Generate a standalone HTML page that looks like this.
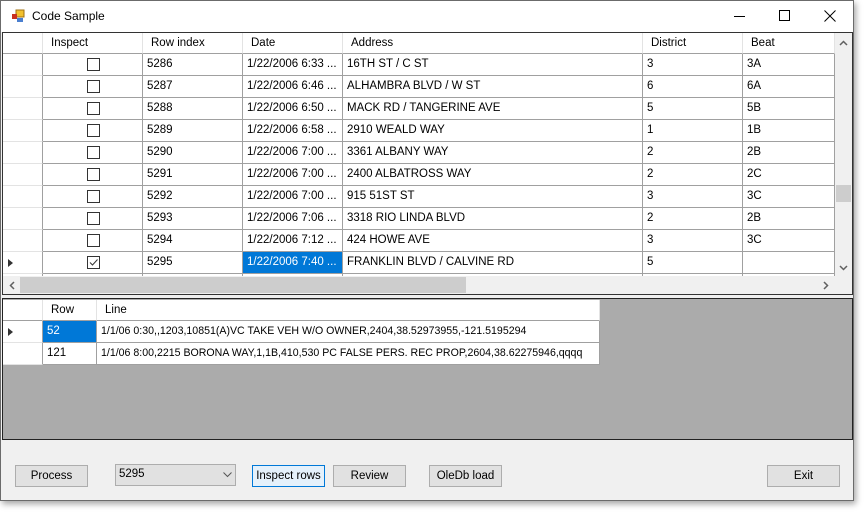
<!DOCTYPE html>
<html><head><style>
*{margin:0;padding:0;box-sizing:border-box}
body{width:866px;height:512px;background:#fff;font-family:"Liberation Sans",sans-serif;font-size:11.5px;color:#000;position:relative;overflow:hidden}
.a{position:absolute}
.win{left:0;top:0;width:854px;height:501px;background:#f0f0f0;border:1px solid #6b6b6b;box-shadow:2px 3px 6px rgba(0,0,0,.35)}
.title{left:1px;top:1px;width:852px;height:31px;background:#fff}
.c{position:absolute;border-right:1px solid #a0a0a0;border-bottom:1px solid #a0a0a0;background:#fff;padding-left:4px;line-height:21px;white-space:nowrap;overflow:hidden}
.h{border-right:1px solid #e3e3e3;padding-left:8px}
.cb{position:absolute;width:13px;height:13px;border:1px solid #333;background:#fff;left:44px;top:4px}
.btn{position:absolute;height:22px;background:#e1e1e1;border:1px solid #adadad;text-align:center;line-height:20px}
</style></head><body>
<div class="a win"></div>
<div class="a title"></div>
<svg class="a" style="left:11px;top:9px" width="14" height="14"><rect x="5" y="1" width="8" height="7" fill="#f2c12e" stroke="#a07010" stroke-width="1"/><rect x="1" y="5" width="5" height="5" fill="#c83020"/><rect x="6" y="9" width="6" height="4" fill="#4a7fd0"/></svg>
<div class="a" style="left:32px;top:9px;font-size:12px">Code Sample</div>
<div class="a" style="left:734px;top:16px;width:11px;height:1px;background:#000"></div>
<div class="a" style="left:779px;top:10px;width:11px;height:11px;border:1px solid #000"></div>
<svg class="a" style="left:824px;top:10px" width="12" height="12"><path d="M0.5 0.5L11.5 11.5M11.5 0.5L0.5 11.5" stroke="#000"/></svg>

<div class="a" style="left:2px;top:32px;width:851px;height:263px;border:1px solid #333;background:#fff;overflow:hidden"></div>
<div class="a" style="left:2px;top:298px;width:851px;height:142px;border:1px solid #222;background:#ababab"></div>
<div id="top"></div>

<div class="btn" style="left:15px;top:465px;width:73px">Process</div>
<div class="a" style="left:115px;top:464px;width:121px;height:22px;background:#e1e1e1;border:1px solid #adadad;padding-left:3px;line-height:18px">5295<svg class="a" style="left:107px;top:7px" width="9" height="6"><path d="M0.5 0.5L4.5 4.5L8.5 0.5" stroke="#555" fill="none"/></svg></div>
<div class="btn" style="left:252px;top:465px;width:73px;background:#e5f1fb;border-color:#0078d7">Inspect rows</div>
<div class="btn" style="left:333px;top:465px;width:73px">Review</div>
<div class="btn" style="left:429px;top:465px;width:73px">OleDb load</div>
<div class="btn" style="left:767px;top:465px;width:73px">Exit</div>

<script>
var o='';
var cols=[[3,40],[43,100],[143,100],[243,100],[343,300],[643,100],[743,92]];
var hd=['','Inspect','Row index','Date','Address','District','Beat'];
for(var i=0;i<7;i++)o+='<div class="c h" style="left:'+cols[i][0]+'px;top:33px;width:'+cols[i][1]+'px;height:21px;border-bottom-color:#a0a0a0">'+hd[i]+'</div>';
var rows=[['5286','1/22/2006 6:33 ...','16TH ST / C ST','3','3A'],['5287','1/22/2006 6:46 ...','ALHAMBRA BLVD / W ST','6','6A'],['5288','1/22/2006 6:50 ...','MACK RD / TANGERINE AVE','5','5B'],['5289','1/22/2006 6:58 ...','2910 WEALD WAY','1','1B'],['5290','1/22/2006 7:00 ...','3361 ALBANY WAY','2','2B'],['5291','1/22/2006 7:00 ...','2400 ALBATROSS WAY','2','2C'],['5292','1/22/2006 7:00 ...','915 51ST ST','3','3C'],['5293','1/22/2006 7:06 ...','3318 RIO LINDA BLVD','2','2B'],['5294','1/22/2006 7:12 ...','424 HOWE AVE','3','3C'],['5295','1/22/2006 7:40 ...','FRANKLIN BLVD / CALVINE RD','5',''],['','','','','']];
for(var r=0;r<rows.length;r++){var y=54+r*22;var h=r==10?3:22;
 for(var i=0;i<7;i++){var st='left:'+cols[i][0]+'px;top:'+y+'px;width:'+cols[i][1]+'px;height:'+h+'px;';var t='';
  if(i==0){t=r==9?'<svg style="position:absolute;left:5px;top:7px" width="5" height="8"><path d="M0 0L5 4L0 8Z" fill="#333"/></svg>':'';st+='border-right-color:#a0a0a0;border-bottom-color:#e3e3e3;'}
  else if(i==1){t=r<10?'<div class="cb">'+(r==9?'<svg width="11" height="11" style="position:absolute;left:0;top:0"><path d="M2 5.5L4.5 8L9.5 2.5" stroke="#333" fill="none"/></svg>':'')+'</div>':''}
  else {t=rows[r][i-2];if(r==9&&i==3)st+='background:#0078d7;color:#fff;';}
  o+='<div class="c" style="'+st+'">'+t+'</div>';}}
o+='<div class="a" style="left:835px;top:33px;width:17px;height:243px;background:#f0f0f0"></div>';
o+='<div class="a" style="left:836px;top:185px;width:15px;height:17px;background:#cdcdcd"></div>';
o+='<svg class="a" style="left:839px;top:40px" width="9" height="6"><path d="M1 5L4.5 1.5L8 5" stroke="#606060" stroke-width="1.5" fill="none"/></svg>';
o+='<svg class="a" style="left:839px;top:265px" width="9" height="6"><path d="M1 1L4.5 4.5L8 1" stroke="#606060" stroke-width="1.5" fill="none"/></svg>';
o+='<div class="a" style="left:3px;top:276px;width:832px;height:18px;background:#f0f0f0"></div>';
o+='<div class="a" style="left:20px;top:277px;width:446px;height:16px;background:#cdcdcd"></div>';
o+='<svg class="a" style="left:9px;top:281px" width="6" height="9"><path d="M5 1L1.5 4.5L5 8" stroke="#606060" stroke-width="1.5" fill="none"/></svg>';
o+='<svg class="a" style="left:823px;top:281px" width="6" height="9"><path d="M1 1L4.5 4.5L1 8" stroke="#606060" stroke-width="1.5" fill="none"/></svg>';
o+='<div class="a" style="left:835px;top:276px;width:17px;height:18px;background:#f0f0f0"></div>';
var c2=[[3,40],[43,54],[97,503]];var h2=['','Row','Line'];
for(var i=0;i<3;i++)o+='<div class="c h" style="left:'+c2[i][0]+'px;top:300px;width:'+c2[i][1]+'px;height:21px">'+h2[i]+'</div>';
var r2=[['52','1/1/06 0:30,,1203,10851(A)VC TAKE VEH W/O OWNER,2404,38.52973955,-121.5195294'],['121','1/1/06 8:00,2215 BORONA WAY,1,1B,410,530 PC FALSE PERS. REC PROP,2604,38.62275946,qqqq']];
for(var r=0;r<2;r++){var y=321+r*22;
 o+='<div class="c" style="left:3px;top:'+y+'px;width:40px;height:22px;border-bottom-color:#e3e3e3">'+(r==0?'<svg style="position:absolute;left:5px;top:7px" width="5" height="8"><path d="M0 0L5 4L0 8Z" fill="#333"/></svg>':'')+'</div>';
 o+='<div class="c" style="left:43px;top:'+y+'px;width:54px;height:22px;'+(r==0?'background:#0078d7;color:#fff':'')+'">'+r2[r][0]+'</div>';
 o+='<div class="c" style="left:97px;top:'+y+'px;width:503px;height:22px;font-size:10.6px">'+r2[r][1]+'</div>';}
document.getElementById('top').innerHTML=o;
</script>
</body></html>
